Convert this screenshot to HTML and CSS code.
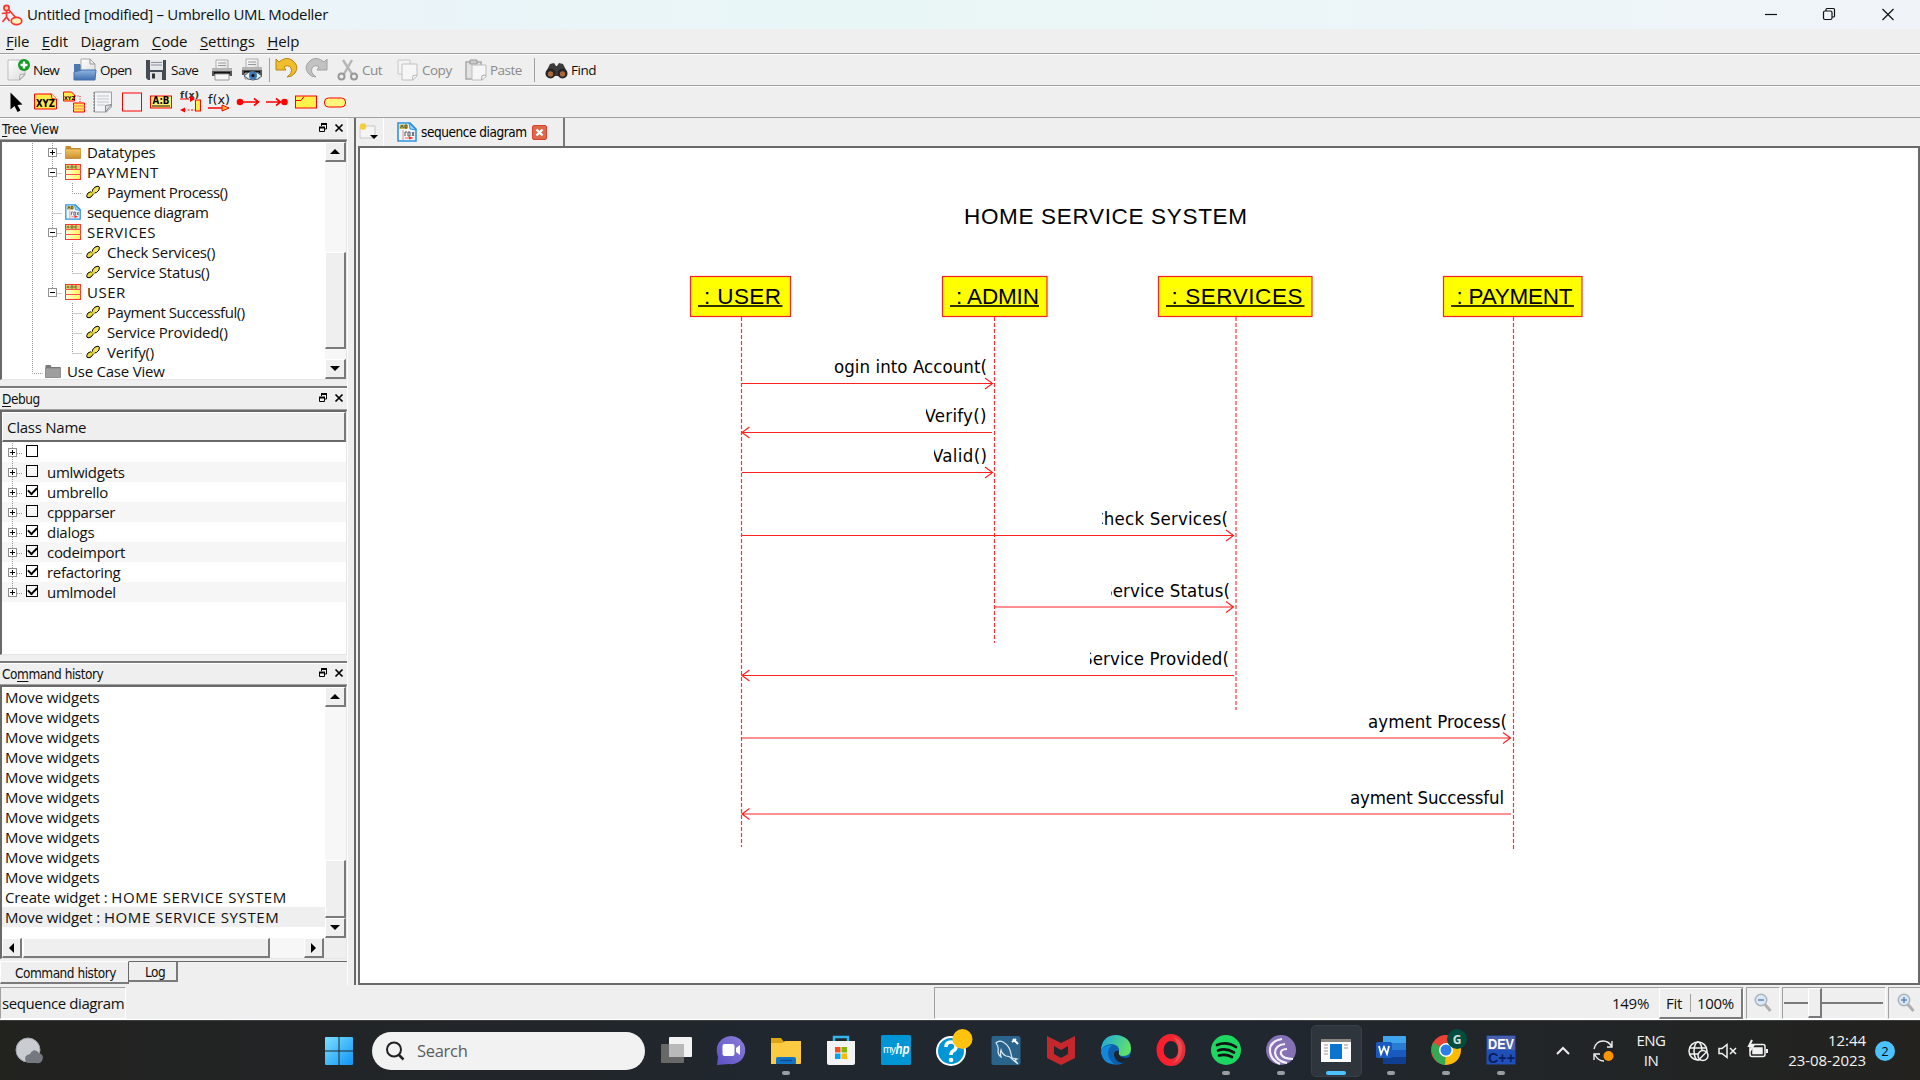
FILE: index.html
```html
<!DOCTYPE html>
<html lang="en">
<head>
<meta charset="utf-8">
<title>Untitled [modified] – Umbrello UML Modeller</title>
<link rel="stylesheet" href="styles.css">
</head>
<body>
<svg class="defs" width="0" height="0">
  <defs>
    <linearGradient id="gWin" x1="0" y1="0" x2="1" y2="1"><stop offset="0" stop-color="#7be0ff"/><stop offset="1" stop-color="#0f95f5"/></linearGradient>
    <linearGradient id="gFolder" x1="0" y1="0" x2="0" y2="1"><stop offset="0" stop-color="#f3c865"/><stop offset="1" stop-color="#cf8e2d"/></linearGradient>
    <linearGradient id="gBlue" x1="0" y1="0" x2="0" y2="1"><stop offset="0" stop-color="#8fb6e0"/><stop offset="1" stop-color="#3f6fb0"/></linearGradient>
    <linearGradient id="gPaper" x1="0" y1="0" x2="1" y2="1"><stop offset="0" stop-color="#fff"/><stop offset="1" stop-color="#dcdcdc"/></linearGradient>
    <linearGradient id="gChat" x1="0" y1="1" x2="1" y2="0"><stop offset="0" stop-color="#5b50c6"/><stop offset="1" stop-color="#8d7fd8"/></linearGradient>
    <linearGradient id="gEdge" x1="0" y1="0" x2="1" y2="0.4"><stop offset="0" stop-color="#1aa4e8"/><stop offset="1" stop-color="#5fe06a"/></linearGradient>
    <linearGradient id="gOpera" x1="0" y1="0" x2="1" y2="0"><stop offset="0" stop-color="#ff1b2d"/><stop offset="1" stop-color="#e0303a"/></linearGradient>
    <linearGradient id="gYel" x1="0" y1="0" x2="1" y2="0"><stop offset="0" stop-color="#fffde0"/><stop offset="1" stop-color="#fff74a"/></linearGradient>
    <symbol id="i-class" viewBox="0 0 16 16"><rect x=".5" y=".5" width="15" height="15" fill="url(#gYel)" stroke="#f33"/><rect x="1" y="1" width="14" height="4" fill="#d8c86a"/><path d="M2 4l1-2 1 2M6 2v2h2V2zM12 2h-2v2h2" fill="none" stroke="#665c20" stroke-width=".8"/><path d="M0 5.500h16M0 10.500h16" stroke="#f55"/></symbol>
    <symbol id="i-op" viewBox="0 0 14 14"><path d="M.7 10.500L2 8l2.500-1.200L7 8v1.500L5 12l-2 .8-2-.5z" fill="#e8d83c" stroke="#000"/><path d="M6.500 5L9 2l3-.8 1.400 1L13 5l-2.500 2.500L8 8 6.500 7z" fill="#f4e65a" stroke="#000"/><path d="M6 8.200l2.500-1.600" stroke="#e8d840" stroke-width="2.400"/></symbol>
    <symbol id="i-seq" viewBox="0 0 20 20"><path d="M1 1h12l6 6v12H1z" fill="#f1f7fc" stroke="#2b94e0" stroke-width="1.6"/><path d="M12 1l1 6 6 1z" fill="#9fd0f5" stroke="#2b94e0"/><rect x="2.500" y="2.500" width="8" height="4.500" fill="#c8b850"/><path d="M3.500 6l1.500-3 1.500 3M8 3v3h2V3z" fill="none" stroke="#554a18" stroke-width=".9"/><path d="M6 8v10" stroke="#e88"/><path d="M8 10v4M8 10h2M11 10h2v4h-2zM15 10l2 4M17 10l-2 4" fill="none" stroke="#555"/><path d="M8 16h5" stroke="#f55"/><path d="M12 14.500l5 1.500-5 1.500z" fill="#e33"/></symbol>
    <symbol id="i-folder" viewBox="0 0 16 14"><path d="M.5 1h5l1 2h9v10.500H.5z" fill="#c78a2c"/><path d="M0 4h16l-.5 9.500H.5z" fill="url(#gFolder)" stroke="#b57f28" stroke-width=".6"/></symbol>
    <symbol id="i-folderg" viewBox="0 0 16 14"><path d="M.5 1h5l1 2h9v10.500H.5z" fill="#7a7a7a"/><path d="M0 4h16l-.5 9.500H.5z" fill="#9e9e9e" stroke="#777" stroke-width=".6"/></symbol>
    <symbol id="i-dock" viewBox="0 0 26 10"><path d="M3.500 3V1h5v5H6" fill="none" stroke="#000"/><path d="M3 1h6" stroke="#000" stroke-width="2"/><path d="M1.500 4.500h5v4h-5z" fill="#efefef" stroke="#000"/><path d="M1 4.500h6" stroke="#000" stroke-width="2"/><path d="M17.500 1.500l7 7M24.500 1.500l-7 7" stroke="#000" stroke-width="1.700"/></symbol>
    <symbol id="i-exp" viewBox="0 0 9 9"><rect x=".5" y=".5" width="8" height="8" fill="#fff" stroke="#919191"/><path d="M2 4.500h5M4.500 2v5" stroke="#000"/></symbol>
    <symbol id="i-col" viewBox="0 0 9 9"><rect x=".5" y=".5" width="8" height="8" fill="#fff" stroke="#919191"/><path d="M2 4.500h5" stroke="#000"/></symbol>
    <symbol id="i-print" viewBox="0 0 22 22"><path d="M5 1h12v9H5z" fill="url(#gPaper)" stroke="#aaa"/><path d="M7 4h8M7 6.500h8" stroke="#999"/><path d="M1 9h20v8H1z" fill="#555"/><path d="M1 9h20v3H1z" fill="#b4b4b4"/><path d="M3 14h16" stroke="#111" stroke-width="2"/><path d="M4 15h14v6H4z" fill="#f6f6f6" stroke="#999"/></symbol>
    <symbol id="i-zoom" viewBox="0 0 18 20"><circle cx="7" cy="7" r="5.700" fill="#dbe8f4" stroke="#a9b4bf" stroke-width="1.500"/><path d="M11 11.500l5.500 6.500" stroke="#b0b0b0" stroke-width="3"/><path d="M4 7h6" stroke="#5c88b8" stroke-width="1.500"/></symbol>
  </defs>
</svg>

<header class="titlebar">
  <svg class="app-icon" width="22" height="22" viewBox="0 0 22 22" fill="none" stroke="#f33" stroke-width="1.700"><circle cx="5.500" cy="4" r="2.600" fill="#ffd9b0"/><path d="M5.500 7v6M1 9.500l8-1M5.500 13l-4 5M5.500 13l3 4M8 6l7 8"/><ellipse cx="15.500" cy="17" rx="5.300" ry="3.600" fill="#fdf6b8"/></svg>
  <span class="title">Untitled [modified] – Umbrello UML Modeller</span>
  <svg class="winbtns" width="140" height="29" viewBox="0 0 140 29" fill="none" stroke="#111" stroke-width="1.200"><path d="M5 14.500h12"/><rect x="63.500" y="11" width="8.500" height="8.500" rx="1.500"/><path d="M66 11V9.500q0-1 1-1h6.500q1 0 1 1V16q0 1-1 1H72"/><path d="M122.500 9l11 11M133.500 9l-11 11"/></svg>
</header>

<nav class="menubar">
  <span><u>F</u>ile</span><span><u>E</u>dit</span><span>D<u>i</u>agram</span><span><u>C</u>ode</span><span><u>S</u>ettings</span><span><u>H</u>elp</span>
</nav>

<div class="toolbar main-tools">
  <div class="tool t-new"><svg width="24" height="24" viewBox="0 0 24 24"><path d="M1 2h17v15l-5 5H1z" fill="url(#gPaper)" stroke="#bdbdbd"/><path d="M18 16l-5 .5-.5 5.500z" fill="#eee" stroke="#aaa"/><circle cx="17" cy="7" r="6" fill="#129a24"/><path d="M17 3.500v7M13.500 7h7" stroke="#fff" stroke-width="2.400"/></svg><span>New</span></div>
  <div class="tool t-open"><svg width="24" height="24" viewBox="0 0 24 24"><path d="M1 6h6l2 3h13v13H1z" fill="#4c78b2"/><path d="M8 1h9l5 5v9H8z" fill="url(#gPaper)" stroke="#a8a8a8"/><path d="M17 1v5h5" fill="none" stroke="#999"/><path d="M1 14l8-2h14l-1 10H1z" fill="url(#gBlue)" stroke="#4572ad"/></svg><span>Open</span></div>
  <div class="tool t-save"><svg width="22" height="22" viewBox="0 0 22 22"><path d="M1 1h20v20H3l-2-2z" fill="#454b55"/><path d="M5 1h13v10H5z" fill="#e6e8ec"/><path d="M6 3.500h11M6 6h11" stroke="#8b9099"/><path d="M5 13h12v8H5z" fill="#dfe1e4"/><path d="M7 14.500h3v5H7z" fill="#333"/></svg><span>Save</span></div>
  <svg class="t-print" width="22" height="22"><use href="#i-print"/></svg>
  <svg class="t-prev" width="24" height="24" viewBox="0 0 24 24"><use href="#i-print" width="22" height="22"/><path d="M3 18q8-9 18 0-9 8-18 0z" fill="#e9f0f8" stroke="#456"/><circle cx="12" cy="17.500" r="4" fill="#3c78b8"/><circle cx="12" cy="17.500" r="1.600" fill="#111"/></svg>
  <i class="sep s1"></i>
  <svg class="t-undo" width="23" height="20" viewBox="0 0 23 20"><path d="M1 1l3 3Q11-2 17 2q8 6 3 13-3 4-8 4 6-4 4-9-3-4-7-1l2 3H1z" fill="#f0bd2c" stroke="#b98310"/></svg>
  <svg class="t-redo" width="23" height="20" viewBox="0 0 23 20"><path d="M22 1l-3 3Q12-2 6 2q-8 6-3 13 3 4 8 4-6-4-4-9 3-4 7-1l-2 3h10z" fill="#c2c2c2" stroke="#a2a2a2"/></svg>
  <div class="tool off t-cut"><svg width="22" height="22" viewBox="0 0 22 22"><path d="M6 1l9 14M15 1L7 15" stroke="#b5b5b5" stroke-width="2.400"/><g fill="none" stroke="#999" stroke-width="2"><ellipse cx="4.500" cy="17.500" rx="3" ry="3"/><ellipse cx="17" cy="17.500" rx="3" ry="3"/></g></svg><span>Cut</span></div>
  <div class="tool off t-copy"><svg width="22" height="22" viewBox="0 0 22 22"><path d="M1 1h12v14H1z" fill="#f3f3f3" stroke="#c8c8c8"/><path d="M5 5h15v12l-4 4H5z" fill="#f6f6f6" stroke="#c0c0c0"/><path d="M20 16l-4 .5-.5 4.500" fill="none" stroke="#bbb"/></svg><span>Copy</span></div>
  <div class="tool off t-paste"><svg width="22" height="22" viewBox="0 0 22 22"><path d="M1 3h15v17H1z" fill="#e2e2e2" stroke="#a9a9a9" stroke-width="1.500"/><path d="M5 1h7v4H5z" fill="#ccc" stroke="#999"/><path d="M7 6h14v12l-4 3H7z" fill="#f6f6f6" stroke="#bcbcbc"/><path d="M21 16l-4 .5-.5 4.500" fill="none" stroke="#aaa"/></svg><span>Paste</span></div>
  <i class="sep s2"></i>
  <div class="tool t-find"><svg width="23" height="18" viewBox="0 0 23 18"><path d="M5 3l4-1 2 3h1l2-3 4 1 4 8v4H1v-4z" fill="#3c3c3c"/><circle cx="5.500" cy="12.500" r="5" fill="#252525"/><circle cx="17.500" cy="12.500" r="5" fill="#252525"/><circle cx="5.500" cy="13" r="2.700" fill="#a8683c"/><circle cx="17.500" cy="13" r="2.700" fill="#a8683c"/></svg><span>Find</span></div>
</div>

<div class="toolbar uml-tools">
  <svg width="352" height="30" viewBox="0 .5 352 30">
    <path d="M10.500 6v17l4-3.500 3 6 3-1.500-3-5.500 5-.5z" fill="#000"/>
    <path d="M34.500 7.500h17l5 5v10h-22z" fill="#ffe84a" stroke="#f00"/><path d="M51 7l1 5 5 1" fill="#ffb" stroke="#f00"/><text class="pix" x="36" y="20" textLength="19" lengthAdjust="spacingAndGlyphs">XYZ</text>
    <path d="M63.500 5.500h8l3 3v6h-11z" fill="#ffe84a" stroke="#f00"/><text class="pix tiny" x="64" y="13">XYZ</text><path d="M75 9.500h5v7" fill="none" stroke="#f00" stroke-dasharray="1 1.500"/><path d="M73.500 16.500h11v9h-11z" fill="#ffe84a" stroke="#f00"/><path d="M73 19.500h12M73 22.500h12" stroke="#f77"/>
    <path d="M94.500 5.500h17v15l-5 5h-12z" fill="#f2f4f6" stroke="#9aa0a6"/><path d="M97 9.500h12M97 12.500h12M97 15.500h12M97 18.500h8" stroke="#c3c8cd"/><path d="M94 6v19" stroke="#777" stroke-dasharray="1 2" stroke-width="2"/><path d="M111.500 18l-6 1v6.500z" fill="#ddd" stroke="#888"/>
    <rect x="122.500" y="6.500" width="19" height="18" fill="#f0f0f0" stroke="#f00"/>
    <rect x="150.500" y="9.500" width="21" height="12" fill="#ffef70" stroke="#f00"/><text class="pix" x="152.500" y="17.500" textLength="17" lengthAdjust="spacingAndGlyphs">A:B</text><path d="M152 19.500h18" stroke="#111"/>
    <text class="fx" x="180" y="11" textLength="19" lengthAdjust="spacingAndGlyphs">f(x)</text><rect x="195.500" y="13.500" width="5" height="11" fill="#ffef40" stroke="#f00"/><path d="M180 12.500h9M190 12.500h4" stroke="#f00"/><path d="M190 9.500l5 3-5 3z" fill="#f00"/><path d="M184 23.500h11" stroke="#f00" stroke-dasharray="2 1.500"/><path d="M180 23.500l5-2.500v5z" fill="#f00"/>
    <text class="fx big" x="208" y="17" textLength="22" lengthAdjust="spacingAndGlyphs">f(x)</text><path d="M208 21.500h15" stroke="#f00" stroke-width="1.500"/><path d="M222 18.500l7 3-7 3z" fill="#fb3" stroke="#f00"/>
    <circle cx="240" cy="15.500" r="3.300" fill="#f00"/><path d="M240 15.500h18M254 12l4.500 3.500L254 19" fill="none" stroke="#f00" stroke-width="1.600"/>
    <circle cx="284.500" cy="15.500" r="3.300" fill="#f00"/><path d="M266 15.500h15M276 12l4.500 3.500L276 19" fill="none" stroke="#f00" stroke-width="1.600"/>
    <rect x="295.500" y="9.500" width="21" height="12" fill="#fff04a" stroke="#f00"/><path d="M296 14h5l3-4" fill="none" stroke="#f00"/>
    <rect x="324.500" y="11.500" width="21" height="9" rx="4" fill="#fff57a" stroke="#f00"/>
  </svg>
</div>

<main class="workspace">
  <aside class="docks">
    <section class="dock dock-tree">
      <h2><span class="tv"><u>T</u>ree View</span><svg width="26" height="10"><use href="#i-dock"/></svg></h2>
      <div class="sunken tree">
        <div class="rows">
          <div class="row l2"><svg width="16" height="16"><use href="#i-folder"/></svg>Datatypes</div>
          <div class="row l2 caps"><svg width="16" height="16"><use href="#i-class"/></svg>PAYMENT</div>
          <div class="row l3 tight"><svg width="14" height="14"><use href="#i-op"/></svg>Payment Process()</div>
          <div class="row l2 tight"><svg width="16" height="16"><use href="#i-seq"/></svg>sequence diagram</div>
          <div class="row l2 caps"><svg width="16" height="16"><use href="#i-class"/></svg>SERVICES</div>
          <div class="row l3"><svg width="14" height="14"><use href="#i-op"/></svg>Check Services()</div>
          <div class="row l3"><svg width="14" height="14"><use href="#i-op"/></svg>Service Status()</div>
          <div class="row l2 caps"><svg width="16" height="16"><use href="#i-class"/></svg>USER</div>
          <div class="row l3 tight"><svg width="14" height="14"><use href="#i-op"/></svg>Payment Successful()</div>
          <div class="row l3"><svg width="14" height="14"><use href="#i-op"/></svg>Service Provided()</div>
          <div class="row l3"><svg width="14" height="14"><use href="#i-op"/></svg>Verify()</div>
          <div class="row l1"><svg width="16" height="16"><use href="#i-folderg"/></svg>Use Case View</div>
        </div>
        <svg class="branches" width="90" height="237" viewBox="0 0 90 237"><path d="M30.500 1v230.500h10M50.500 1v150M50.500 11.500h10M50.500 31.500h10M50.500 71.500h10M50.500 91.500h10M50.500 151.500h10M70.500 41v10.500h10M70.500 101v30.500M70.500 111.500h10M70.500 131.500h10M70.500 161v50.500M70.500 171.500h10M70.500 191.500h10M70.500 211.500h10" fill="none" stroke="#999" stroke-dasharray="1 1"/><use href="#i-exp" x="46" y="6" width="9" height="9"/><use href="#i-col" x="46" y="26" width="9" height="9"/><use href="#i-col" x="46" y="86" width="9" height="9"/><use href="#i-col" x="46" y="146" width="9" height="9"/></svg>
        <div class="vbar"><i class="btn up"></i><i class="gap g-tree"></i><i class="btn th-tree"></i><i class="gap grow"></i><i class="btn down"></i></div>
      </div>
    </section>

    <section class="dock dock-debug">
      <h2><span><u>D</u>ebug</span><svg width="26" height="10"><use href="#i-dock"/></svg></h2>
      <div class="sunken debug">
        <div class="colhead">Class Name</div>
        <div class="drow"><svg class="ex" width="9" height="9"><use href="#i-exp"/></svg><i class="cb"></i></div>
        <div class="drow"><svg class="ex" width="9" height="9"><use href="#i-exp"/></svg><i class="cb"></i>umlwidgets</div>
        <div class="drow"><svg class="ex" width="9" height="9"><use href="#i-exp"/></svg><i class="cb on"></i>umbrello</div>
        <div class="drow"><svg class="ex" width="9" height="9"><use href="#i-exp"/></svg><i class="cb"></i>cppparser</div>
        <div class="drow"><svg class="ex" width="9" height="9"><use href="#i-exp"/></svg><i class="cb on"></i>dialogs</div>
        <div class="drow"><svg class="ex" width="9" height="9"><use href="#i-exp"/></svg><i class="cb on"></i>codeimport</div>
        <div class="drow"><svg class="ex" width="9" height="9"><use href="#i-exp"/></svg><i class="cb on"></i>refactoring</div>
        <div class="drow"><svg class="ex" width="9" height="9"><use href="#i-exp"/></svg><i class="cb on"></i>umlmodel</div>
        <svg class="twigs" width="24" height="152" viewBox="0 0 24 152"><path d="M10.500 1v145M15 11.500h6M15 31.500h6M15 51.500h6M15 71.500h6M15 91.500h6M15 111.500h6M15 131.500h6M15 151.500h6" fill="none" stroke="#999" stroke-dasharray="1 1"/></svg>
      </div>
    </section>

    <section class="dock dock-history">
      <h2><span>Co<u>m</u>mand history</span><svg width="26" height="10"><use href="#i-dock"/></svg></h2>
      <div class="sunken history">
        <div class="hmain">
          <div class="rows">
            <div class="hrow">Move widgets</div><div class="hrow">Move widgets</div><div class="hrow">Move widgets</div><div class="hrow">Move widgets</div><div class="hrow">Move widgets</div><div class="hrow">Move widgets</div><div class="hrow">Move widgets</div><div class="hrow">Move widgets</div><div class="hrow">Move widgets</div><div class="hrow">Move widgets</div>
            <div class="hrow">Create widget : <span class="caps">HOME SERVICE SYSTEM</span></div>
            <div class="hrow sel">Move widget : <span class="caps">HOME SERVICE SYSTEM</span></div>
          </div>
          <div class="vbar"><i class="btn up"></i><i class="gap grow"></i><i class="btn th-hist"></i><i class="btn down"></i></div>
        </div>
        <div class="hbar"><i class="btn left"></i><i class="btn th-h"></i><i class="gap grow"></i><i class="btn right"></i><i class="corner"></i></div>
      </div>
      <div class="tabs"><span class="tab current">Command history</span><span class="tab log">Log</span></div>
    </section>
  </aside>

  <section class="editor">
    <div class="doc-tabs">
      <svg width="20" height="18" viewBox="0 0 20 18"><path d="M2 3h14v12H1V5z" fill="#f5f5f5" stroke="#c8c8c8"/><circle cx="4" cy="3.500" r="3.300" fill="#f4cf3c"/><path d="M11 12h8l-4 4z" fill="#000"/></svg>
      <div class="doc-tab"><svg width="20" height="20"><use href="#i-seq"/></svg><span>sequence diagram</span><svg class="close" width="15" height="15" viewBox="0 0 15 15"><rect x=".5" y=".5" width="14" height="14" rx="1.500" fill="#d96a4a" stroke="#e0402c"/><path d="M4.500 4.500l6 6M10.500 4.500l-6 6" stroke="#fff" stroke-width="2.400"/></svg></div>
    </div>
    <div class="canvas">
      <svg width="1556" height="832" viewBox="360 148 1556 832">
        <g class="heads"><rect x="690.500" y="276.500" width="100" height="40"/><rect x="942.500" y="276.500" width="104.500" height="40"/><rect x="1158.500" y="276.500" width="153.500" height="40"/><rect x="1443.500" y="276.500" width="138.500" height="40"/></g>
        <path d="M698 306h84.500M950 306h89M1166 306h138.500M1451 306h123" stroke="#333300" stroke-width="2"/>
        <g class="names">
          <text x="964" y="223.500" textLength="283">HOME SERVICE SYSTEM</text>
          <text x="704" y="304" textLength="77">: USER</text>
          <text x="956" y="304" textLength="83">: ADMIN</text>
          <text x="1171.500" y="304" textLength="131">: SERVICES</text>
          <text x="1456.500" y="304" textLength="116">: PAYMENT</text>
        </g>
        <g class="life"><path d="M741.500 317v530"/><path d="M994.500 317v326"/><path d="M1236 317v393"/><path d="M1513.500 317v533"/></g>
        <g class="msg">
          <path d="M742 383.500h250M985 378l7.500 5.500-7.500 5.500"/>
          <path d="M992 432.500H742M749.500 427l-7.500 5.500 7.500 5.500"/>
          <path d="M742 472.500h250M985 467l7.500 5.500-7.500 5.500"/>
          <path d="M742 535.500h491M1226 530l7.500 5.500-7.500 5.500"/>
          <path d="M995 607h238M1226 601.500l7.500 5.500-7.500 5.500"/>
          <path d="M1234 675.500H742M749.500 670l-7.500 5.500 7.500 5.500"/>
          <path d="M742 738h768M1503 732.500l7.500 5.500-7.500 5.500"/>
          <path d="M1511 814H742M749.500 808.500L742 814l7.500 5.500"/>
        </g>
        <clipPath id="cuts"><path d="M834 350h153v40H834zM926 400h61v40h-61zM934 440h60v30h-60zM1102 500h126v34h-126zM1111 575h119v30h-119zM1090 645h139v28h-139zM1368 705h139v30h-139zM1351 785h154v28h-154z"/></clipPath>
        <g class="labels" clip-path="url(#cuts)">
          <text x="834" y="373" textLength="153">ogin into Account(</text>
          <text x="924.500" y="422" textLength="62">Verify()</text>
          <text x="932" y="462" textLength="55">Valid()</text>
          <text x="1092" y="525" textLength="136">Check Services(</text>
          <text x="1102" y="597" textLength="128">Service Status(</text>
          <text x="1082" y="665" textLength="147">Service Provided(</text>
          <text x="1368" y="728" textLength="139">ayment Process(</text>
          <text x="1350" y="804" textLength="154">ayment Successful</text>
        </g>
      </svg>
    </div>
  </section>
</main>

<footer class="statusbar">
  <span class="panel p-name">sequence diagram</span>
  <span class="panel p-zoom"><span>149%</span><span class="fitbox"><span>Fit</span><i></i><span>100%</span></span></span>
  <span class="panel p-out"><svg width="18" height="20"><use href="#i-zoom"/></svg></span>
  <span class="panel p-slider"><i class="groove"></i><i class="btn handle"></i></span>
  <span class="panel p-in"><svg width="18" height="20" viewBox="0 0 18 20"><use href="#i-zoom"/><path d="M7 4v6" stroke="#5c88b8" stroke-width="1.500"/></svg></span>
</footer>

<div class="taskbar">
  <svg class="weather" width="32" height="30" viewBox="0 0 32 30"><circle cx="14" cy="14" r="12" fill="#c9cdd2"/><circle cx="14" cy="14" r="12" fill="none" stroke="#9ea4ab"/><path d="M12 26q-3-7 4-8 4-7 9-1 6 2 3 8-2 3-6 2H15z" fill="#75797f"/></svg>
  <svg class="start" width="28" height="28" viewBox="0 0 28 28"><path d="M0 1q0-1 1-1h12.500v13.500H0zM14.500 0H27q1 0 1 1v12.500H14.500zM0 14.500h13.500V28H1q-1 0-1-1zM14.500 14.500H28V27q0 1-1 1H14.500z" fill="url(#gWin)"/></svg>
  <div class="search"><svg width="20" height="20" viewBox="0 0 20 20"><circle cx="9" cy="8.500" r="7" fill="none" stroke="#222" stroke-width="2"/><path d="M13.500 13.500l5 5" stroke="#222" stroke-width="2.500"/></svg><span>Search</span></div>
  <div class="apps">
    <div class="app"><svg viewBox="0 0 32 32"><rect x="9" y="3" width="23" height="20" rx="1" fill="#f2f2f2"/><rect x="1" y="10" width="23" height="19" rx="1" fill="#686868"/><path d="M9 10h15v13H9z" fill="#b9b9b9"/></svg></div>
    <div class="app"><svg viewBox="0 0 32 32"><path d="M2 31l1-8Q-1 12 7 5q9-6 18 0 9 9 3 19-5 7-14 6z" fill="url(#gChat)"/><rect x="7.500" y="10" width="12" height="12" rx="2" fill="#fff"/><path d="M21 14l4-3v10l-4-3z" fill="#fff"/></svg></div>
    <div class="app run"><svg viewBox="0 0 32 32"><path d="M1 4h10l3 4h17v10H1z" fill="#dda414"/><path d="M1 9h11l3-2h16v22q0 1-1 1H1z" fill="#fccb41"/><path d="M6 30v-5q0-2 2-2h16q2 0 2 2v5z" fill="#1274c4"/><path d="M10 26.500h12" stroke="#0b4f90" stroke-width="1.500"/></svg></div>
    <div class="app"><svg viewBox="0 0 32 32"><path d="M9 7V3h14v5" fill="none" stroke="#34b5ee" stroke-width="2.500"/><path d="M2 7h28v22q0 2-2 2H4q-2 0-2-2z" fill="#f3f3f3"/><path d="M10 13h5.500v5.500H10z" fill="#f25022"/><path d="M16.500 13H22v5.500h-5.500z" fill="#7fba00"/><path d="M10 19.500h5.500V25H10z" fill="#00a4ef"/><path d="M16.500 19.500H22V25h-5.500z" fill="#ffb900"/></svg></div>
    <div class="app"><svg viewBox="0 0 32 32"><rect x="1" y="1" width="30" height="30" rx="1.500" fill="#0096d6"/><text class="hp" x="3" y="19" textLength="13">my</text><text class="hp b" x="15.500" y="20" textLength="14" lengthAdjust="spacingAndGlyphs">hp</text></svg></div>
    <div class="app"><svg viewBox="0 0 32 32"><circle cx="16" cy="17" r="15" fill="#fff"/><circle cx="16" cy="17" r="13" fill="#0096d6"/><path d="M11 13q0-5 5-5t5 4.500q0 3-3 4.500-2 1-2 4" fill="none" stroke="#fff" stroke-width="3.600"/><circle cx="16" cy="26" r="2.300" fill="#fff"/><circle cx="27.500" cy="5" r="10" fill="#ffc20e"/></svg></div>
    <div class="app"><svg viewBox="0 0 32 32"><rect x="1.500" y="2" width="29" height="29" rx="2" fill="#2a638c"/><path d="M6 9q3-3 7-1 7 4 8 12l1 4 5 1-2 1 3 4-6-5q-2-3-6-3-4-2-5-6-1 3 0 7-3-2-3-6 1-4-2-8z" fill="none" stroke="#d8e6ee" stroke-width="1.200"/><path d="M23 5l5 5M22 8l4-3" stroke="#fff" stroke-width="2"/></svg></div>
    <div class="app"><svg viewBox="0 0 32 32"><path d="M2 2l14 7 14-7v22l-14 7-14-7zM9 12v8l7 4 7-4v-8l-7 4z" fill="#c5282c" fill-rule="evenodd"/></svg></div>
    <div class="app"><svg viewBox="0 0 32 32"><circle cx="16" cy="16" r="15" fill="#0d5fae"/><path d="M1 16Q2 1 17 1q14 2 14 14 0 7-8 7-5 0-4-4 1-7-7-8-8 0-11 6z" fill="url(#gEdge)"/><path d="M12 11Q3 20 14 30 4 31 1 19q0-8 11-8z" fill="#1488d8"/><path d="M19 17q-2 6 7 7 4-1 4-2-2 5-7 7-8-1-9-8 0-5 5-4z" fill="#1b2530"/></svg></div>
    <div class="app"><svg viewBox="0 0 32 32"><ellipse cx="16" cy="16" rx="11" ry="12.500" fill="none" stroke="url(#gOpera)" stroke-width="7"/><path d="M18 3q11 3 9 14t-9 12q5-4 5-13t-5-13z" fill="#ff5a5a" opacity=".6"/></svg></div>
    <div class="app run"><svg viewBox="0 0 32 32"><circle cx="16" cy="16" r="15" fill="#1ed760"/><path d="M7 11q10-4 19 2M8 16.500q8-3 16 2M9 21.500q7-2 13 1.500" fill="none" stroke="#121212" stroke-width="2.700" stroke-linecap="round"/></svg></div>
    <div class="app run"><svg viewBox="0 0 32 32"><circle cx="16" cy="16" r="15" fill="#8572b5"/><path d="M17 5Q4 7 5 18q1 8 10 12M20 10q-10 1-10 9 1 8 12 10M22 15q-7 0-6 5 2 5 12 5" fill="none" stroke="#f4f0fa" stroke-width="2.200"/></svg></div>
    <div class="app run active"><svg viewBox="0 0 32 32"><rect x="1" y="5" width="30" height="23" fill="#fafafa"/><path d="M1 5h30v3H1z" fill="#8b8580"/><rect x="10" y="10" width="12" height="15" fill="#0b74cf"/><path d="M4 11h4M4 14h4M4 17h4M4 20h4M24 11h4M24 14h4" stroke="#999"/></svg></div>
    <div class="app run"><svg viewBox="0 0 32 32"><path d="M8 2h22q1 0 1 1v7H8z" fill="#41a5ee"/><path d="M8 9h23v7H8z" fill="#2b7cd3"/><path d="M8 16h23v7H8z" fill="#185abd"/><path d="M8 23h23v6q0 1-1 1H8z" fill="#103f91"/><rect x="1" y="8" width="16" height="16" rx="1.500" fill="#185abd"/><path d="M4 12l2 8 3-7 3 7 2-8" fill="none" stroke="#fff" stroke-width="1.800"/></svg></div>
    <div class="app run"><svg viewBox="0 0 32 32"><circle cx="16" cy="16" r="15" fill="#ea4335"/><path d="M16 16L3 8.500Q-1 18 6 27q5 4 9 4z" fill="#34a853"/><path d="M16 16l-1 15q15-1 16-15 0-4-2-7H16z" fill="#fbbc05"/><path d="M16 9h13L27 6Q17-3 5 6l5 7z" fill="#ea4335"/><circle cx="16" cy="16" r="7" fill="#fff"/><circle cx="16" cy="16" r="5.500" fill="#2b7de9"/><circle cx="27" cy="5" r="10" fill="#004d40"/><text class="gee" x="27" y="9.500">G</text></svg></div>
    <div class="app run"><svg viewBox="0 0 32 32"><rect x="1.500" y="1.500" width="29" height="29" fill="#1f4fb8"/><path d="M2 2h28v14H2z" fill="#4a5fae"/><text class="dev" x="3" y="15" textLength="26" lengthAdjust="spacingAndGlyphs">DEV</text><text class="dev cpp" x="3" y="29" textLength="27" lengthAdjust="spacingAndGlyphs">C++</text></svg></div>
  </div>
  <svg class="tray" width="64" height="30" viewBox="0 0 64 30" fill="none" stroke="#eee"><path d="M6 18l6-6 6 6" stroke-width="2"/><path d="M43 13q2-8 9-8 6 0 9 6M61 5v6h-5M43 24v-6h6M44 19q3 6 9 6" stroke-width="1.400"/><circle cx="57.500" cy="20" r="5" fill="#ff9500" stroke="none"/></svg>
  <div class="lang"><span>ENG</span><span>IN</span></div>
  <svg class="net" width="82" height="24" viewBox="0 0 82 24" fill="none" stroke="#f2f2f2" stroke-width="1.500"><circle cx="10" cy="12" r="9"/><ellipse cx="10" cy="12" rx="4" ry="9"/><path d="M1.500 9h17M1.500 15h10"/><circle cx="15" cy="16.500" r="5" fill="#22252a"/><path d="M11.500 20l7-7"/><path d="M31 9.500h3l5-4v13l-5-4h-3zM42 9l6 6M48 9l-6 6"/><rect x="62" y="5.500" width="15" height="12" rx="2"/><path d="M65 9h9v5.500h-9z" fill="#f2f2f2"/><path d="M79 10v4" stroke-width="2"/><path d="M64 1l-3 6h4l-3 5" stroke-width="2"/></svg>
  <div class="clock"><span>12:44</span><span>23-08-2023</span></div>
  <span class="count">2</span>
</div>
</body>
</html>
```
FILE: styles.css
```css
* { box-sizing: border-box; }
body { margin: 0; width: 1920px; height: 1080px; overflow: hidden; display: flex; flex-direction: column; background: #efefef; color: #111; font: 15px/20px "Open Sans", "Noto Sans", sans-serif; white-space: nowrap; }
svg { display: block; flex: none; }
.defs { position: absolute; }
i { display: block; flex: none; }
u { text-decoration-thickness: 1px; text-underline-offset: 2px; }

.titlebar { height: 29px; flex: none; display: flex; align-items: center; background: linear-gradient(90deg, #ebf3fb, #e9f6f6 45%, #f0f4f9); padding-left: 1px; }
.app-icon { margin-right: 4px; }
.title { font-size: 15px; letter-spacing: -.32px; padding-bottom: 2px; }
.winbtns { margin-left: auto; margin-right: 20px; }

.menubar { height: 25px; flex: none; display: flex; gap: 12.500px; padding: 2px 6px 0; letter-spacing: -.11px; border-bottom: 1px solid #a0a0a0; }

.toolbar { height: 32px; flex: none; display: flex; align-items: center; border-top: 1px solid #fff; border-bottom: 1px solid #a0a0a0; }
.main-tools { font-size: 13.500px; letter-spacing: -.5px; padding-left: 7px; }
.tool { display: flex; align-items: center; gap: 4px; }
.tool span { padding-bottom: 1px; }
.off { color: #8a8a8a; }
.t-new { width: 66px; gap: 2px; letter-spacing: -.7px; }
.t-open { width: 72px; gap: 3px; letter-spacing: -.8px; }
.t-save { width: 66px; }
.t-print { margin-right: 8px; }
.sep { width: 1px; height: 24px; background: #a0a0a0; }
.s1 { margin: 0 5px 0 4px; }
.t-undo { margin: 0 7px 4px 0; }
.t-redo { margin: 0 9px 4px 0; }
.t-cut { width: 60px; gap: 3px; }
.t-copy { width: 68px; gap: 3px; }
.t-paste { width: 69px; gap: 3px; }
.s2 { margin-right: 10px; }
.t-find { gap: 3px; }

.pix { font: bold 10px "DejaVu Sans", sans-serif; fill: #000; }
.tiny { font-size: 5px; }
.fx { font-family: "DejaVu Sans", sans-serif; font-size: 9px; font-weight: bold; fill: #333; }
.fx.big { font-size: 12px; font-weight: normal; fill: #111; }

.workspace { height: 867px; flex: none; display: flex; }
.docks { width: 348px; height: 867px; display: flex; flex-direction: column; flex: none; border-right: 1px solid #fff; }
.dock { display: flex; flex-direction: column; }
.dock h2 { margin: 0; height: 22px; flex: none; display: flex; justify-content: space-between; align-items: center; padding: 1px 3px 0 2px; font: 13.500px/19px "DejaVu Sans Condensed", "DejaVu Sans", sans-serif; font-stretch: condensed; letter-spacing: -.45px; border-top: 1px solid #fff; border-bottom: 1px solid #a0a0a0; }
.dock h2 svg { margin-bottom: 4px; }
.dock h2 .tv { letter-spacing: -.1px; }
.sunken { background: #fff; border: 1px solid #e6e6e6; border-top: 2px solid #696969; border-left: 2px solid #696969; display: flex; position: relative; overflow: hidden; }
.dock-tree { height: 268px; }
.tree { height: 240px; }
.dock-debug, .dock-history { border-top: 2px solid #7a7a7a; }
.dock-debug { height: 275px; }
.debug { height: 245px; flex-direction: column; }
.rows { flex: 1; }
.row { height: 20px; display: flex; align-items: center; letter-spacing: -.22px; }
.row svg { margin-right: 6px; }
.row.caps { letter-spacing: .5px; }
.row.tight { letter-spacing: -.47px; }
.row.l1 { height: 17px; line-height: 17px; padding: 1px 0 0 43px; }
.l2 { padding-left: 63px; }
.l3 { padding-left: 84px; }
.l3 svg { margin-right: 7px; }
.branches { position: absolute; left: 0; top: 0; }

.vbar { width: 21px; display: flex; flex-direction: column; flex: none; }
.btn { background: #efefef; border: 1px solid #fff; border-right: 2px solid #7a7a7a; border-bottom: 2px solid #7a7a7a; }
.btn.up, .btn.down { width: 21px; height: 20px; display: flex; align-items: center; justify-content: center; }
.btn.left, .btn.right { width: 20px; height: 20px; display: flex; align-items: center; justify-content: center; }
.up::after, .down::after, .left::after, .right::after { content: ""; border: 5px solid transparent; }
.up::after { border-top: 0; border-bottom-color: #000; }
.down::after { border-bottom: 0; border-top-color: #000; }
.left::after { border-left: 0; border-right-color: #000; }
.right::after { border-right: 0; border-left-color: #000; }
.gap { background: #f7f7f7; }
.grow { flex: 1; }
.g-tree { height: 90px; }
.th-tree { height: 97px; }
.th-hist { height: 58px; }
.th-h { width: 247px; height: 20px; margin-left: 1px; }
.corner { width: 22px; background: #efefef; }

.colhead { height: 30px; flex: none; background: #efefef; border: 1px solid #fff; border-right: 2px solid #7a7a7a; border-bottom: 2px solid #696969; padding: 4px 4px 0; font-size: 15px; letter-spacing: -.25px; }
.drow { height: 20px; display: flex; align-items: center; padding-left: 6px; letter-spacing: -.3px; flex: none; }
.drow:nth-child(odd) { background: #f6f6f6; }
.ex { margin-right: 9px; margin-top: 1px; }
.twigs { position: absolute; left: 0; top: 30px; z-index: 0; }
.ex, .cb { position: relative; z-index: 1; }
.cb { width: 12px; height: 12px; border: 1px solid #000; margin: 0 9px 2px 0; display: flex; justify-content: center; }
.on::after { content: ""; width: 7px; height: 4px; border-left: 2px solid #000; border-bottom: 2px solid #000; transform: translate(0, 1px) rotate(-45deg); }

.history { flex-direction: column; height: 274px; }
.hmain { display: flex; height: 251px; }
.hrow { height: 20px; padding-left: 3px; letter-spacing: -.12px; }
.hrow.sel { background: #efefef; }
.hrow .caps { letter-spacing: .6px; }
.hbar { display: flex; height: 20px; }
.tabs { display: flex; align-items: flex-start; margin-top: 2px; height: 24px; font: 13.500px/20px "DejaVu Sans Condensed", "DejaVu Sans", sans-serif; font-stretch: condensed; letter-spacing: -.48px; }
.tab { border: 1px solid #696969; }
.tab.current { width: 129px; height: 23px; padding: 1px 0 0 14px; border-left: 1px solid #fff; border-top-color: #fff; border-bottom: 2px solid #7a7a7a; }
.tab.log { width: 49px; height: 21px; padding-left: 16px; border-right: 2px solid #7a7a7a; border-bottom: 2px solid #7a7a7a; border-left: 0; }
.tabs::after { content: ""; flex: 1; border-top: 1px solid #696969; }

.editor { flex: 1; margin-left: 6px; border-left: 2px solid #696969; display: flex; flex-direction: column; }
.doc-tabs { height: 28px; display: flex; align-items: center; padding-left: 3px; flex: none; }
.doc-tab { width: 182px; height: 28px; margin-left: 4px; padding-left: 13px; display: flex; align-items: center; border-left: 1px solid #fff; border-right: 2px solid #7a7a7a; font: 13.500px/20px "DejaVu Sans Condensed", "DejaVu Sans", sans-serif; font-stretch: condensed; letter-spacing: -.45px; color: #000; }
.doc-tab span { width: 111px; margin: 0 0 0 4px; }
.canvas { width: 1562px; height: 839px; margin-left: 2px; background: #fff; border: 2px solid #696969; flex: none; }
.heads rect { fill: #ff0; stroke: #f22; stroke-width: 1.200; }
.names text { font: 22.500px "Liberation Sans", Arial, sans-serif; fill: #000; }
.life path { fill: none; stroke: #f33; stroke-width: 1.200; stroke-dasharray: 4 2; }
.msg path { fill: none; stroke: #f22; stroke-width: 1.200; }
.labels text { font: 18.500px "DejaVu Sans Condensed", "DejaVu Sans", sans-serif; font-stretch: condensed; fill: #000; }

.statusbar { height: 35px; flex: none; display: flex; padding-top: 2px; border-bottom: 1px solid #fff; }
.panel { height: 32px; border: 1px solid #a0a0a0; border-right-color: #fff; border-bottom-color: #fff; display: flex; align-items: center; flex: none; }
.p-name { width: 126px; padding-left: 1px; margin-right: 808px; letter-spacing: -.42px; }
.p-zoom { width: 810px; justify-content: flex-end; letter-spacing: -.3px; }
.fitbox { width: 84px; height: 31px; margin-left: 10px; display: flex; align-items: center; padding-left: 6px; border: 1px solid #fff; border-right: 2px solid #7a7a7a; border-bottom: 2px solid #7a7a7a; }
.fitbox i { width: 1px; height: 18px; background: #a0a0a0; margin: 0 6px 0 8px; }
.p-out { width: 34px; margin-left: 2px; padding-left: 7px; }
.p-slider { width: 104px; margin-left: 2px; position: relative; }
.groove { width: 99px; height: 2px; margin-left: 1px; background: #7a7a7a; }
.handle { position: absolute; left: 25px; top: 0; width: 14px; height: 30px; }
.p-in { width: 33px; margin-left: 2px; padding-left: 8px; }

.taskbar { flex: 1; display: flex; align-items: center; border-top: 1px solid #3c4040; background: linear-gradient(90deg, #22221f, #22262a 25%, #20272f 45%, #20272f 65%, #222423 90%, #23221f); color: #f4f4f4; }
.weather { margin-left: 14px; }
.start { margin-left: 279px; }
.search { width: 273px; height: 38px; margin-left: 19px; border-radius: 19px; background: #f2f2f2; color: #5c5c5c; display: flex; align-items: center; gap: 12px; padding-left: 13px; font-size: 16.500px; letter-spacing: -.3px; }
.apps { display: flex; margin-left: 3px; height: 100%; }
.app { width: 55px; display: flex; align-items: center; justify-content: center; position: relative; }
.app > svg { width: 32px; height: 32px; overflow: visible; margin-bottom: 1px; }
.run::after { content: ""; position: absolute; bottom: 5px; left: 24px; width: 8px; height: 4px; border-radius: 2px; background: #9a9da1; }
.app.active::before { content: ""; position: absolute; z-index: 0; left: 3px; top: 4px; width: 49px; height: 50px; border-radius: 5px; background: #2f353d; border: 1px solid #3a4047; }
.app.active svg { position: relative; z-index: 1; }
.app.active::after { left: 18px; width: 20px; background: #4cc2ff; z-index: 1; }
.hp { font: 10.500px "Liberation Sans", Arial, sans-serif; fill: #fff; }
.hp.b { font-size: 15px; font-weight: bold; font-style: italic; }
.gee { font: bold 12px "Open Sans", sans-serif; fill: #cfe0dc; text-anchor: middle; }
.dev { font: bold 14px "Liberation Sans", Arial, sans-serif; fill: #fff; }
.dev.cpp { fill: #0a1d60; }
.tray { margin-left: 23px; }
.lang { width: 44px; margin-left: 14px; display: flex; flex-direction: column; align-items: center; letter-spacing: -.5px; }
.net { margin-left: 15px; }
.clock { width: 96px; display: flex; flex-direction: column; align-items: flex-end; letter-spacing: -.05px; }
.clock, .lang { padding-bottom: 2px; }
.count { width: 20px; height: 20px; margin-left: 9px; border-radius: 50%; background: #4cc2ff; color: #111; text-align: center; font-size: 13px; }
```
